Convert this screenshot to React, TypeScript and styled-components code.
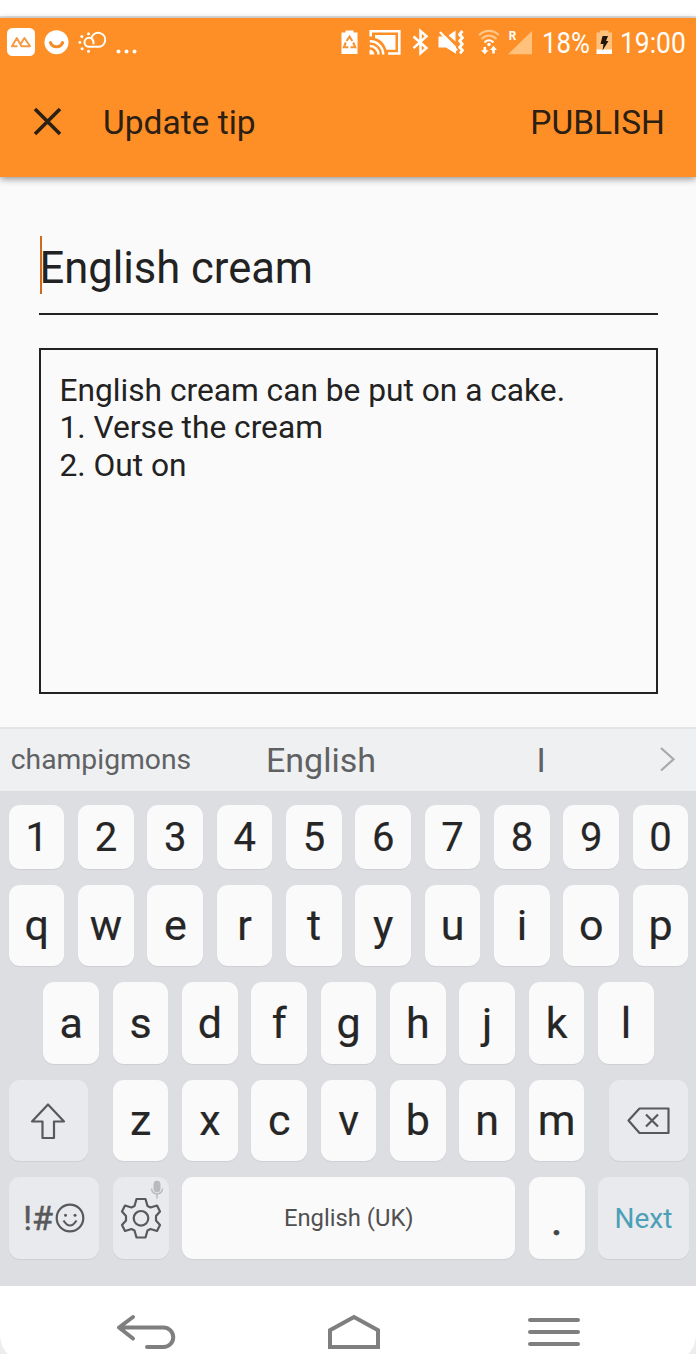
import React from "react";
import styled, { createGlobalStyle } from "styled-components";

const GlobalStyle = createGlobalStyle`
  * { box-sizing: border-box; }
  body { margin: 0; background: #ededed; font-family: Roboto, "Liberation Sans", sans-serif; }
`;

const Screen = styled.div`
  width: 696px;
  height: 1354px;
  overflow: hidden;
  display: flex;
  flex-direction: column;
  background: #ededed;
`;

const TopEdge = styled.div`
  flex: none;
  height: 18px;
  background: #fff;
  border-bottom: 2px solid #e4e3e4;
`;

const Header = styled.header`
  flex: none;
  height: 159px;
  background: #fe8f26;
  box-shadow: 0 2px 7px rgba(0, 0, 0, 0.42);
  z-index: 1;
`;

const StatusBar = styled.div`
  height: 48px;
  display: flex;
  justify-content: space-between;
  align-items: center;
  padding: 0 9px 0 7px;
`;

const StatusGroup = styled.div`
  display: flex;
  align-items: center;
`;

const StatusIcon = styled.svg<{ $gap?: number }>`
  display: block;
  flex: none;
  height: 28px;
  margin-left: ${(p) => p.$gap ?? 0}px;
  fill: #fff;
`;

const StatusText = styled.div<{ $width: number; $gap: number; $scale: number }>`
  width: ${(p) => p.$width}px;
  margin-left: ${(p) => p.$gap}px;
  padding-top: 2px;
  font-size: 30px;
  line-height: 30px;
  color: #fff;
  white-space: nowrap;
  transform: scaleX(${(p) => p.$scale});
  transform-origin: 0 50%;
`;

const AppBar = styled.div`
  height: 111px;
  display: flex;
  align-items: center;
  padding: 2px 31px 0 33px;
  color: #2b2013;
  font-size: 33.5px;
  line-height: 40px;
`;

const CloseIcon = styled.svg`
  width: 29px;
  height: 29px;
  margin-right: 41px;
  margin-bottom: 3px;
`;

const AppTitle = styled.h1`
  margin: 0;
  flex: 1;
  font: inherit;
`;

const PublishButton = styled.button`
  border: 0;
  padding: 0;
  background: none;
  color: inherit;
  font: inherit;
`;

const Form = styled.main`
  flex: none;
  height: 550px;
  padding: 59px 38px 0 39px;
  background: #fafafa;
  color: #222;
`;

const TitleField = styled.div`
  height: 79px;
  border-bottom: 2px solid #222;
  display: flex;
  align-items: flex-start;
  font-size: 43.5px;
  line-height: 65px;
  white-space: nowrap;
`;

const Caret = styled.span`
  width: 2.5px;
  height: 58px;
  margin-left: 0.5px;
  margin-right: -2.5px;
  background: #cc6a20;
`;

const BodyField = styled.div`
  height: 346px;
  margin-top: 33px;
  padding: 22px 18.5px;
  border: 2px solid #222;
  font-size: 31.7px;
  line-height: 37.3px;
`;

const Suggestions = styled.div`
  flex: none;
  height: 64px;
  background: #eff0f2;
  border-top: 2px solid #e3e4e6;
  display: flex;
  align-items: center;
  color: #606163;
  white-space: nowrap;
`;

const Suggestion = styled.div<{ $width: number; $size?: number }>`
  width: ${(p) => p.$width}px;
  font-size: ${(p) => p.$size ?? 34}px;
  line-height: 40px;
  text-align: center;
`;

const Keyboard = styled.section`
  flex: none;
  height: 495px;
  padding: 14px 7.5px 0 8.8px;
  background: #dddee2;
  display: flex;
  flex-direction: column;
  gap: 16.1px;
`;

const KeyRow = styled.div<{ $height?: number; $inset?: number }>`
  height: ${(p) => p.$height ?? 81.3}px;
  padding-left: ${(p) => p.$inset ?? 0}px;
  display: flex;
  gap: 13.65px;
`;

const Key = styled.div<{ $width?: number; $size?: number; $special?: boolean; $before?: number }>`
  flex: none;
  position: relative;
  width: ${(p) => p.$width ?? 55.7}px;
  margin-left: ${(p) => p.$before ?? 0}px;
  height: 100%;
  border-radius: 11px;
  background: ${(p) => (p.$special ? "#e9eaee" : "#fafafb")};
  box-shadow: 0 1px 1px rgba(0, 0, 0, 0.07);
  display: flex;
  align-items: center;
  justify-content: center;
  font-size: ${(p) => p.$size ?? 43}px;
  line-height: 1;
  color: #262626;
  white-space: nowrap;
`;

const KeyCap = styled.span<{ $shift?: number }>`
  -webkit-text-stroke: 0.2px #262626;
  padding-top: ${(p) => p.$shift ?? 0}px;
`;

const SpaceLabel = styled.span`
  color: #505050;
  padding-top: 2px;
`;

const NextLabel = styled.span`
  color: #4b9fb7;
  padding-top: 2px;
`;

const Dot = styled.span`
  color: #444;
  padding-top: 5px;
  -webkit-text-stroke: 0.8px #444;
`;

const KeyIcon = styled.svg`
  display: block;
  fill: none;
  stroke: #58595b;
  stroke-width: 2.2;
  stroke-linejoin: round;
`;

const SymbolLabel = styled.span`
  color: #58595b;
  margin-right: 2px;
  -webkit-text-stroke: 0.5px #58595b;
`;

const MicBadge = styled.svg`
  position: absolute;
  top: 3px;
  right: 5px;
  fill: #b9babd;
  stroke: #b9babd;
`;

const NavBar = styled.nav`
  flex: none;
  height: 76px;
  padding: 27px 116px 0;
  background: #fff;
  border-radius: 0 0 27px 27px;
  display: flex;
  align-items: flex-start;
`;

const NavIcon = styled.svg<{ $before?: number }>`
  display: block;
  margin-left: ${(p) => p.$before ?? 0}px;
  fill: none;
  stroke: #7f7f7f;
  stroke-width: 4;
`;

const LeftStatus = () => (
  <StatusGroup>
    <StatusIcon width="28" viewBox="0 0 28 28">
      <rect width="28" height="28" rx="5.5" />
      <path d="M10.5 18.3H5L9.8 10 14.500 18.300H23L17.500 10 13.500 16" fill="none" stroke="#f59a45" strokeWidth="2" strokeLinejoin="round" />
    </StatusIcon>
    <StatusIcon $gap={9} width="25" viewBox="0 0 25 28">
      <circle cx="12.5" cy="14.3" r="12" />
      <path d="M6.5 14.700a6.300 5.800 0 0 0 12 0" fill="none" stroke="#f28c28" strokeWidth="3.2" strokeLinecap="round" />
    </StatusIcon>
    <StatusIcon $gap={9} width="29" viewBox="0 0 29 28">
      <path d="M15.5 15.500C15.500 11.500 13.500 9.800 11 9.800A4.500 4.500 0 0 0 11 18.800H20A7 7 0 1 0 13.800 9" fill="none" stroke="#fff" strokeWidth="2" strokeLinecap="round" />
      <circle cx="10.5" cy="5.8" r="1.5" /><circle cx="3.8" cy="8.5" r="1.5" /><circle cx="1.9" cy="14.5" r="1.4" /><circle cx="4.1" cy="20.8" r="1.5" /><circle cx="10.5" cy="23.2" r="1.5" />
    </StatusIcon>
    <StatusIcon $gap={9} width="22" viewBox="0 0 22 28">
      <circle cx="2.5" cy="23.5" r="2" /><circle cx="10.5" cy="23.5" r="2" /><circle cx="18.5" cy="23.5" r="2" />
    </StatusIcon>
  </StatusGroup>
);

const RightStatus = () => (
  <StatusGroup>
    <StatusIcon width="17" viewBox="0 0 17 28">
      <path d="M1 4.500H4.500V2.500H12.500V4.500H16.500V26H.5V4.500Z" />
      <g fill="none" stroke="#f59336" strokeWidth="2.1">
        <path d="m5.600 13 2.900-4.300 2.900 4.300M4.800 14.500l-1.900 4.700h4.500M12.200 14.500l2 4.700H9.500" />
      </g>
    </StatusIcon>
    <StatusIcon $gap={11} width="32" viewBox="0 0 32 28">
      <g fill="none" stroke="#fff">
        <path d="M1.700 8.500V3.300H30.300V25.500H19" strokeWidth="2.6" />
        <path d="M.8 13.300A13 13 0 0 1 14.200 26.500M.8 18A8.500 8.500 0 0 1 9.500 26.500" strokeWidth="2.4" />
      </g>
      <path d="M6 7H26.500V21.800H17.500C15.500 15.500 12 11.500 6 10ZM.5 21.800A5 5 0 0 1 5.300 26.500H.5Z" />
    </StatusIcon>
    <StatusIcon $gap={11} width="17" viewBox="0 0 17 28">
      <path d="m1.500 8.500 13 11.500-6 5.200V3l6 5.200-13 12" fill="none" stroke="#fff" strokeWidth="2.5" />
    </StatusIcon>
    <StatusIcon $gap={9} width="27" viewBox="0 0 27 28">
      <path d="M.5 8.500H8L18 18.500V25.700L8 19.500H.5ZM17.500 2.500V13.500L10.500 7.500Z" />
      <path d="m2 4 17 18.500" stroke="#fff" strokeWidth="2.4" />
      <path d="M24.500 3 21.500 6.500l3 3.200-3 3.200 3 3.200-3 3.200 3 3-2.500 3" fill="none" stroke="#fff" strokeWidth="2.8" strokeLinejoin="round" />
    </StatusIcon>
    <StatusIcon $gap={13} width="22" viewBox="0 0 22 28">
      <g fill="none" strokeWidth="2.2" strokeLinecap="round">
        <path d="M1.800 6.500a13.500 13.500 0 0 1 18.400 0M4.200 10.500a9.500 9.500 0 0 1 13.600 0" stroke="#ffc78b" />
        <path d="M7.200 13.800a5.800 5.800 0 0 1 7.600 0" stroke="#fff" />
      </g>
      <circle cx="11" cy="16.5" r="1.7" />
      <path d="M5.500 19h2.600v3.300h2.500L6.800 26.300 3 22.300h2.500ZM14.200 25.500h2.600V22h2.100L15.500 17.800 12.100 22h2.100Z" />
    </StatusIcon>
    <StatusIcon $gap={8} width="25" viewBox="0 0 25 28">
      <path d="M24 3V26.300H0Z" fill="#ffc17c" />
      <text x="0.8" y="12.3" fontSize="13" fontWeight="700" fontFamily="Roboto" textLength="7.5" lengthAdjust="spacingAndGlyphs">R</text>
    </StatusIcon>
    <StatusText $gap={9} $width={54} $scale={0.86}>18%</StatusText>
    <StatusIcon $gap={0} width="17" viewBox="0 0 17 28">
      <path d="M.5 4.500H4V2.500H12.500V4.500H16V22H.5Z" fill="#ffc17c" />
      <path d="M.5 21.500H16V26H.5Z" />
      <path d="M6.500 8H12L10 13H12.500L6.500 22.500 7.500 16H4.500Z" fill="#21180b" />
    </StatusIcon>
    <StatusText $gap={7} $width={67} $scale={0.88}>19:00</StatusText>
  </StatusGroup>
);

const letterKeys = (letters: string, size?: number, shift?: number) =>
  letters.split("").map((c) => (
    <Key key={c} $size={size}>
      <KeyCap $shift={shift}>{c}</KeyCap>
    </Key>
  ));

export default function App() {
  return (
    <>
      <GlobalStyle />
      <Screen>
        <TopEdge />
        <Header>
          <StatusBar>
            <LeftStatus />
            <RightStatus />
          </StatusBar>
          <AppBar>
            <CloseIcon viewBox="0 0 29 29">
              <path d="m2 2 25 25M27 2 2 27" stroke="#2b2013" strokeWidth="3.6" />
            </CloseIcon>
            <AppTitle>Update tip</AppTitle>
            <PublishButton>PUBLISH</PublishButton>
          </AppBar>
        </Header>
        <Form>
          <TitleField>
            <Caret />
            English cream
          </TitleField>
          <BodyField>
            <div>English cream can be put on a cake.</div>
            <div>1. Verse the cream</div>
            <div>2. Out on</div>
          </BodyField>
        </Form>
        <Suggestions>
          <Suggestion $width={202} $size={28.3}>champigmons</Suggestion>
          <Suggestion $width={238}>English</Suggestion>
          <Suggestion $width={202}>I</Suggestion>
          <KeyIcon width="54" height="28" viewBox="0 0 54 28">
            <path d="M19 2 31.500 13.300 19 24.500" stroke="#a8a9ab" strokeLinejoin="miter" />
          </KeyIcon>
        </Suggestions>
        <Keyboard>
          <KeyRow $height={64}>{letterKeys("1234567890", 40, 1.5)}</KeyRow>
          <KeyRow>{letterKeys("qwertyuiop")}</KeyRow>
          <KeyRow $inset={34.6}>{letterKeys("asdfghjkl")}</KeyRow>
          <KeyRow>
            <Key $special $width={79.4}>
              <KeyIcon width="36" height="38" viewBox="0 0 36 38">
                <path d="M18 2.500 34 19.500H24V36H12.500V19.500H2Z" />
              </KeyIcon>
            </Key>
            <Key $before={10.9}><KeyCap>z</KeyCap></Key>
            {letterKeys("xcvbnm")}
            <Key $special $width={79.4} $before={10.9}>
              <KeyIcon width="43" height="28" viewBox="0 0 43 28">
                <path d="M1.500 13.500 12.500 1.500H41.500V26H12.500ZM19 7.500l12 12M31 7.500 19 19.500" />
              </KeyIcon>
            </Key>
          </KeyRow>
          <KeyRow>
            <Key $special $width={90.5} $size={34}>
              <SymbolLabel>!#</SymbolLabel>
              <KeyIcon width="30" height="30" viewBox="0 0 30 30">
                <circle cx="15" cy="15" r="13.3" />
                <path d="M8.500 17.500q6.500 10 13 0" />
                <circle cx="10.5" cy="12.3" r="1.5" fill="#58595b" stroke="none" />
                <circle cx="20" cy="12.3" r="1.5" fill="#58595b" stroke="none" />
              </KeyIcon>
            </Key>
            <Key $special>
              <KeyIcon width="42" height="42" viewBox="0 0 42 42">
                <path d="M16.500 2H25.500L27.500 9 30.500 10.500 37 8.500 40 14.500 36 19V23.500L40 28 37 34 30.500 32 27.500 33.500 25.500 40.500H16.500L14.500 33.500 11.500 32 5 34 2 28 6 23.500V19L2 14.500 5 8.500 11.500 10.500 14.500 9Z" />
                <circle cx="21" cy="21.3" r="7.3" />
              </KeyIcon>
              <MicBadge width="14" height="19" viewBox="0 0 14 19">
                <rect x="4" y="1" width="6" height="11" rx="3" />
                <path d="M1.500 8.500a5.500 5.500 0 0 0 11 0M7 14V18.500" fill="none" strokeWidth="1.5" />
              </MicBadge>
            </Key>
            <Key $width={333} $size={23.8}><SpaceLabel>English (UK)</SpaceLabel></Key>
            <Key><Dot>.</Dot></Key>
            <Key $special $width={90.5} $size={28}><NextLabel>Next</NextLabel></Key>
          </KeyRow>
        </Keyboard>
        <NavBar>
          <NavIcon width="60" height="38" viewBox="0 0 60 38">
            <path d="M17 4 3 14.500 17 25.500M3 14.500H47.500a9.700 9.700 0 0 1 0 19.500H31" strokeLinecap="round" strokeLinejoin="round" />
          </NavIcon>
          <NavIcon $before={152} width="52" height="38" viewBox="0 0 52 38">
            <path d="M2 34V17.200L26 4 50 17.200V34Z" />
          </NavIcon>
          <NavIcon $before={148} width="52" height="38" viewBox="0 0 52 38">
            <path d="M2 7H50M2 19H50M2 31H50" strokeLinecap="round" />
          </NavIcon>
        </NavBar>
      </Screen>
    </>
  );
}
